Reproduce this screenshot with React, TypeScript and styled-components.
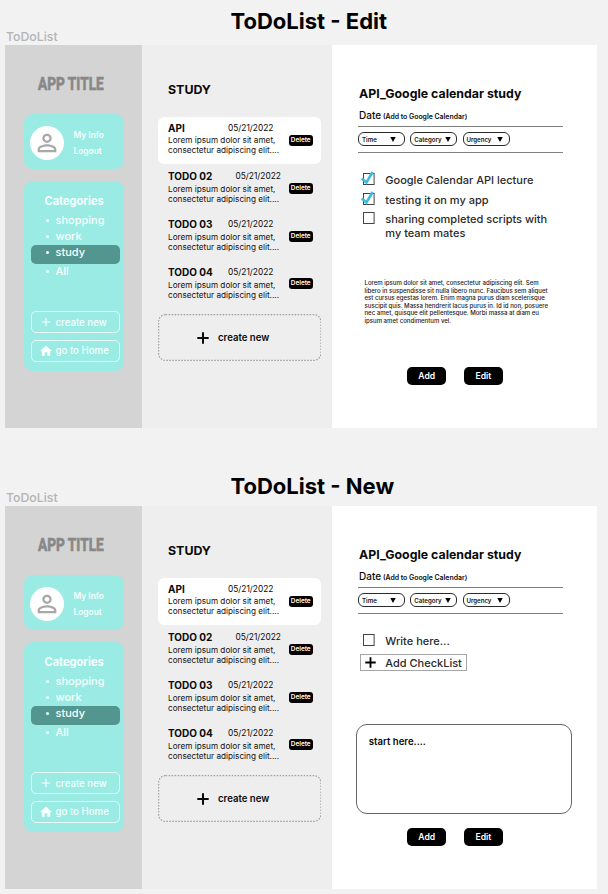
import React from "react";
import styled, { createGlobalStyle, css } from "styled-components";

const GlobalStyle = createGlobalStyle`
  * { box-sizing: border-box; }
  body { margin: 0; background: #f2f2f2; font-family: Inter, "Liberation Sans", sans-serif; color: #0a0a0a; }
  ul { list-style: none; margin: 0; padding: 0; }
  p, h1, h2, h3, h4 { margin: 0; }
  button { font-family: inherit; padding: 0; border: 0; margin: 0; }
`;

const Page = styled.main`
  width: 608px;
  height: 894px;
  overflow: hidden;
`;

const Header = styled.header<{ $height: number }>`
  display: flex;
  align-items: flex-end;
  height: ${(p) => p.$height}px;
  padding-left: 6px;
`;

const FrameLabel = styled.span`
  width: 224.5px;
  font-size: 12.3px;
  line-height: 16px;
  font-weight: 500;
  color: #b4b4b4;
`;

const ScreenTitle = styled.h1<{ $lift: number }>`
  font-size: 22px;
  line-height: 28px;
  font-weight: 700;
  color: #000;
  margin-bottom: ${(p) => p.$lift}px;
  white-space: nowrap;
`;

const Frame = styled.section`
  display: grid;
  grid-template-columns: 137px 190px 265px;
  width: 592px;
  height: 382.5px;
  margin-left: 5px;
`;

const Sidebar = styled.aside`
  background: #d4d4d4;
  padding: 29px 18px 0 18.5px;
`;

const AppTitle = styled.h2`
  width: 92px;
  margin-left: 14px;
  font-family: Roboto, sans-serif;
  font-size: 19px;
  line-height: 20px;
  font-weight: 700;
  color: #888;
  white-space: nowrap;
  transform: scaleX(0.72);
  transform-origin: left center;
  -webkit-text-stroke: 0.7px #888;
`;

const card = css`
  background: #99ebe4;
  border-radius: 9px;
  color: #f6fffe;
`;

const Profile = styled.div`
  ${card}
  display: flex;
  align-items: center;
  height: 55px;
  margin-top: 20px;
  padding: 3px 0 0 6.5px;
`;

const Avatar = styled.div`
  display: grid;
  place-items: center;
  width: 34px;
  height: 34px;
  border-radius: 50%;
  background: #fff;
`;

const ProfileLinks = styled.div`
  display: flex;
  flex-direction: column;
  margin: 1.5px 0 0 9.5px;
  font-size: 8.4px;
  line-height: 15.5px;
  font-weight: 600;
`;

const CategoryCard = styled.nav`
  ${card}
  height: 190px;
  margin-top: 12px;
  padding: 12px 4.5px 0 7px;
`;

const CategoryHeading = styled.h3`
  margin-left: 14px;
  font-size: 11.06px;
  line-height: 16px;
  font-weight: 700;
`;

const Categories = styled.ul`
  height: 102px;
  padding-top: 3px;
`;

const Category = styled.li<{ $active: boolean }>`
  display: flex;
  align-items: center;
  height: 16px;
  padding-left: 15.5px;
  font-size: 11px;
  line-height: 16px;
  font-weight: 500;
  ${(p) =>
    p.$active &&
    css`
      height: 19px;
      margin: 1px 0 -1px;
      padding-bottom: 5px;
      border-radius: 5px;
      background: #539690;
    `}
  &::before {
    content: "";
    width: 3px;
    height: 3px;
    margin-right: 6.5px;
    border-radius: 50%;
    background: currentColor;
  }
`;

const SideButton = styled.button`
  display: flex;
  align-items: center;
  width: 89px;
  height: 22px;
  margin-bottom: 6.5px;
  padding-left: 8px;
  border: 1.3px solid #e8fbf9;
  border-radius: 5px;
  background: none;
  color: #f6fffe;
  font-size: 9.68px;
  font-weight: 500;
  white-space: nowrap;
  svg { flex: none; width: 12px; height: 12px; margin-right: 4px; }
`;

const ListColumn = styled.div`
  background: #eee;
  padding: 36px 11.5px 0 15.5px;
`;

const ListHeading = styled.h3`
  height: 36.3px;
  margin-left: 10.5px;
  font-size: 12.4px;
  line-height: 17px;
  font-weight: 700;
`;

const Todo = styled.article<{ $active: boolean }>`
  display: flex;
  justify-content: space-between;
  height: 46.4px;
  margin-bottom: 1.8px;
  padding: 4.6px 7.5px 0 10.5px;
  border-radius: 6px;
  background: ${(p) => (p.$active ? "#fff" : "transparent")};
`;

const TodoHead = styled.div`
  display: flex;
  height: 13.6px;
  line-height: 13px;
`;

const TodoName = styled.h4<{ $width: number }>`
  width: ${(p) => p.$width}px;
  font-size: 10px;
  font-weight: 700;
`;

const TodoDate = styled.time`
  font-size: 8.35px;
`;

const TodoText = styled.p`
  font-size: 8.2px;
  line-height: 10px;
  white-space: nowrap;
  color: #111;
`;

const DeleteButton = styled.button<{ $top: number }>`
  width: 24.5px;
  height: 11px;
  margin-top: ${(p) => p.$top}px;
  border-radius: 3px;
  background: #000;
  color: #fff;
  font-size: 6.4px;
  line-height: 11px;
  font-weight: 600;
`;

const NewTodo = styled.button`
  position: relative;
  display: flex;
  align-items: center;
  width: 163.5px;
  height: 47px;
  margin-top: 6px;
  padding-left: 39px;
  background: none;
  color: #0a0a0a;
  font-size: 9.6px;
  font-weight: 600;
`;

const PlusSlot = styled.span`
  display: flex;
  width: 12px;
  height: 12px;
  margin-right: 9.5px;
`;

const DashedOutline = styled.svg`
  position: absolute;
  inset: 0;
  width: 100%;
  height: 100%;
`;

const Detail = styled.div`
  display: flex;
  flex-direction: column;
  background: #fff;
  padding: 40px 0 0 26.3px;
`;

const DetailTitle = styled.h2`
  height: 22px;
  margin-left: 0.7px;
  font-size: 12.35px;
  line-height: 18px;
  font-weight: 700;
`;

const DateLine = styled.p`
  height: 19px;
  margin-left: 0.7px;
  font-size: 10px;
  line-height: 16px;
  font-weight: 500;
  span { margin-left: -0.8px; font-size: 6.9px; font-weight: 600; }
`;

const Filters = styled.div`
  display: flex;
  gap: 5.2px;
  width: 204.5px;
  height: 27px;
  padding-top: 5px;
  border-top: 1px solid #808080;
  border-bottom: 1px solid #808080;
`;

const Filter = styled.button<{ $end: number }>`
  display: flex;
  align-items: center;
  justify-content: space-between;
  width: 47px;
  height: 14px;
  padding: 0 ${(p) => p.$end}px 0 2.8px;
  border: 1px solid #2a2a2a;
  border-radius: 6px;
  background: none;
  color: #111;
  font-size: 6.1px;
  font-weight: 600;
  svg { width: 6px; height: 5px; }
`;

const Checklist = styled.ul<{ $height: number }>`
  display: flex;
  flex-direction: column;
  gap: 6px;
  height: ${(p) => p.$height}px;
  padding: 21.4px 0 0 4.7px;
`;

const CheckItem = styled.li`
  display: flex;
  font-size: 11px;
  line-height: 13.5px;
  font-weight: 500;
  color: #2a2a2a;
  svg { flex: none; width: 16px; height: 16px; margin: -3px 8.3px -3px -2px; overflow: visible; }
`;

const AddCheck = styled.li`
  display: flex;
  align-items: center;
  width: 106.5px;
  height: 17px;
  margin: -0.5px 0 0 -2.7px;
  padding-left: 3.5px;
  border: 1px solid #a6a6a6;
  font-size: 11px;
  font-weight: 500;
  color: #2a2a2a;
  white-space: nowrap;
  svg { width: 11px; height: 11px; margin-right: 9.5px; color: #000; }
`;

const Memo = styled.p`
  height: 87.5px;
  padding-left: 6.2px;
  font-size: 6.06px;
  line-height: 7.53px;
  font-weight: 500;
  color: #222;
  white-space: pre;
`;

const MemoField = styled.div`
  width: 216px;
  height: 90px;
  margin: 0 0 14px -2px;
  padding: 9.5px 0 0 11.5px;
  border: 1px solid #666;
  border-radius: 11px;
  font-size: 9.6px;
  line-height: 13px;
  font-weight: 600;
`;

const Actions = styled.div`
  display: flex;
  gap: 17.7px;
  padding-left: 49px;
`;

const ActionButton = styled.button`
  width: 39px;
  height: 18px;
  border-radius: 5px;
  background: #000;
  color: #fff;
  font-size: 8.6px;
  line-height: 18px;
  font-weight: 600;
`;

const Plus = ({ weight }: { weight: number }) => (
  <svg viewBox="0 0 12 12" fill="none" stroke="currentColor" strokeWidth={weight}>
    <path d="M6 .3V11.7M.3 6H11.7" />
  </svg>
);

const ThinPlus = () => (
  <svg viewBox="0 0 12 12" fill="none" stroke="currentColor" strokeWidth={1.1}>
    <path d="M6 1.8V10.2M1.8 6H10.2" />
  </svg>
);

const Person = () => (
  <svg width="28" height="28" viewBox="0 0 24 24" fill="#a8a8a8">
    <path d="M12 5.9a2.1 2.1 0 1 1 0 4.2 2.1 2.1 0 0 1 0-4.2m0 9c2.97 0 6.1 1.46 6.1 2.1v1.1H5.9V17c0-.64 3.13-2.1 6.1-2.1M12 4C9.79 4 8 5.79 8 8s1.79 4 4 4 4-1.79 4-4-1.79-4-4-4m0 9c-2.67 0-8 1.34-8 4v3h16v-3c0-2.66-5.33-4-8-4" />
  </svg>
);

const Home = () => (
  <svg viewBox="2 2 20 20" fill="currentColor">
    <path d="M10 20v-6h4v6h5v-8h3L12 3 2 12h3v8z" />
  </svg>
);

const CheckBox = ({ checked }: { checked: boolean }) => (
  <svg viewBox="0 0 16 16" fill="none">
    <rect x="2.5" y="2.5" width="10.6" height="11" stroke="#444" />
    {checked && <path d="M.8 7.6 5.4 11.6 11.6 1" stroke="#3cbbe0" strokeWidth="2.6" />}
  </svg>
);

const categories = ["shopping", "work", "study", "All"];

const filters = [
  { name: "Time", end: 8.5 },
  { name: "Category", end: 5.5 },
  { name: "Urgency", end: 5.5 },
];

const todos = [
  { name: "API", width: 60, top: 13.4 },
  { name: "TODO 02", width: 67.5, top: 13.4 },
  { name: "TODO 03", width: 60, top: 13 },
  { name: "TODO 04", width: 60, top: 11.4 },
];

const memo = [
  "Lorem ipsum dolor sit amet, consectetur adipiscing elit. Sem",
  "libero in suspendisse sit nulla libero nunc. Faucibus sem aliquet",
  "est cursus egestas lorem. Enim magna purus diam scelerisque",
  "suscipit quis. Massa hendrerit lacus purus in. Id id non, posuere",
  "nec amet, quisque elit pellentesque. Morbi massa at diam eu",
  "ipsum amet condimentum vel.",
].join("\n");

function EditBody() {
  return (
    <>
      <Checklist $height={126}>
        <CheckItem><CheckBox checked />Google Calendar API lecture</CheckItem>
        <CheckItem><CheckBox checked />testing it on my app</CheckItem>
        <CheckItem>
          <CheckBox checked={false} />
          <span>sharing completed scripts with<br />my team mates</span>
        </CheckItem>
      </Checklist>
      <Memo>{memo}</Memo>
    </>
  );
}

function NewBody() {
  return (
    <>
      <Checklist $height={110}>
        <CheckItem><CheckBox checked={false} />Write here...</CheckItem>
        <AddCheck><Plus weight={2} />Add CheckList</AddCheck>
      </Checklist>
      <MemoField>start here....</MemoField>
    </>
  );
}

function TodoScreen({ children }: { children: React.ReactNode }) {
  return (
    <Frame>
      <Sidebar>
        <AppTitle>APP TITLE</AppTitle>
        <Profile>
          <Avatar><Person /></Avatar>
          <ProfileLinks><span>My Info</span><span>Logout</span></ProfileLinks>
        </Profile>
        <CategoryCard>
          <CategoryHeading>Categories</CategoryHeading>
          <Categories>
            {categories.map((c) => (
              <Category key={c} $active={c === "study"}>{c}</Category>
            ))}
          </Categories>
          <SideButton><ThinPlus />create new</SideButton>
          <SideButton><Home />go to Home</SideButton>
        </CategoryCard>
      </Sidebar>
      <ListColumn>
        <ListHeading>STUDY</ListHeading>
        {todos.map((t) => (
          <Todo key={t.name} $active={t.name === "API"}>
            <div>
              <TodoHead>
                <TodoName $width={t.width}>{t.name}</TodoName>
                <TodoDate>05/21/2022</TodoDate>
              </TodoHead>
              <TodoText>Lorem ipsum dolor sit amet,<br />consectetur adipiscing elit....</TodoText>
            </div>
            <DeleteButton $top={t.top}>Delete</DeleteButton>
          </Todo>
        ))}
        <NewTodo>
          <DashedOutline viewBox="0 0 163.5 47" fill="none">
            <rect x="0.6" y="0.6" width="162.3" height="45.8" rx="7" stroke="#a0a0a0" strokeWidth="1.2" strokeDasharray="1.6 1.4" />
          </DashedOutline>
          <PlusSlot><Plus weight={2} /></PlusSlot>
          create new
        </NewTodo>
      </ListColumn>
      <Detail>
        <DetailTitle>API_Google calendar study</DetailTitle>
        <DateLine>Date <span>(Add to Google Calendar)</span></DateLine>
        <Filters>
          {filters.map((f) => (
            <Filter key={f.name} $end={f.end}>
              {f.name}
              <svg viewBox="0 0 6 5"><path d="M.3 0H5.7L3 5z" fill="#000" /></svg>
            </Filter>
          ))}
        </Filters>
        {children}
        <Actions>
          <ActionButton>Add</ActionButton>
          <ActionButton>Edit</ActionButton>
        </Actions>
      </Detail>
    </Frame>
  );
}

export default function App() {
  return (
    <Page>
      <GlobalStyle />
      <Header $height={45}>
        <FrameLabel>ToDoList</FrameLabel>
        <ScreenTitle $lift={10}>ToDoList - Edit</ScreenTitle>
      </Header>
      <TodoScreen><EditBody /></TodoScreen>
      <Header $height={78.5}>
        <FrameLabel>ToDoList</FrameLabel>
        <ScreenTitle $lift={5.6}>ToDoList - New</ScreenTitle>
      </Header>
      <TodoScreen><NewBody /></TodoScreen>
    </Page>
  );
}
